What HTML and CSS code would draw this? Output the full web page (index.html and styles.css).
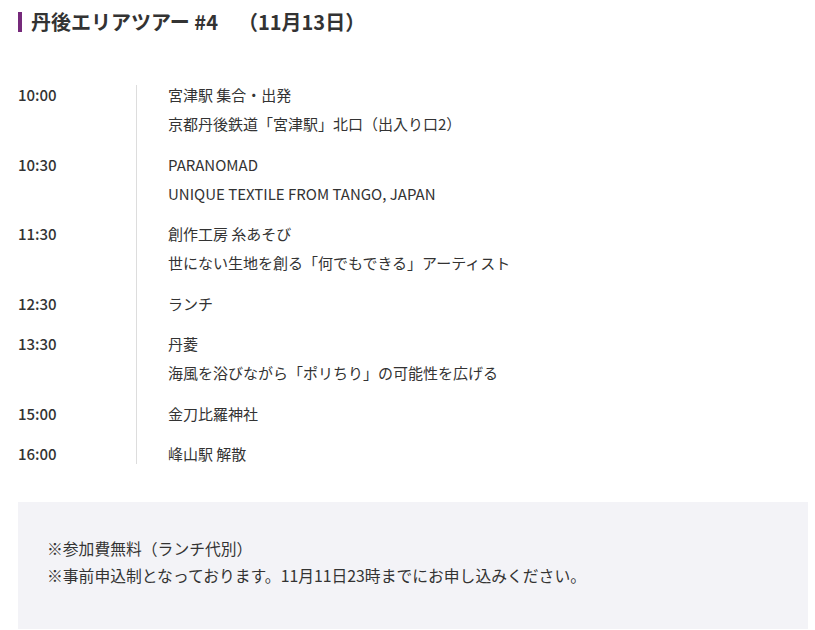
FILE: index.html
```html
<!DOCTYPE html>
<html lang="ja">
<head>
    <meta charset="UTF-8">
    <title>丹後エリアツアー #4</title>
    <meta name="viewport" content="width=device-width, initial-scale=1">
    <link rel="stylesheet" href="styles.css">
</head>
<body>
    <div class="container">
        <h2 class="tour-title">丹後エリアツアー #4<span class="tour-date">（11月13日）</span></h2>

        <div class="schedule">
            <div class="row">
                <div class="time">10:00</div>
                <div class="detail">
                    <p>宮津駅 集合・出発</p>
                    <p>京都丹後鉄道「宮津駅」北口（出入り口2）</p>
                </div>
            </div>
            <div class="row">
                <div class="time">10:30</div>
                <div class="detail">
                    <p>PARANOMAD</p>
                    <p>UNIQUE TEXTILE FROM TANGO, JAPAN</p>
                </div>
            </div>
            <div class="row">
                <div class="time">11:30</div>
                <div class="detail">
                    <p>創作工房 糸あそび</p>
                    <p>世にない生地を創る「何でもできる」アーティスト</p>
                </div>
            </div>
            <div class="row">
                <div class="time">12:30</div>
                <div class="detail">
                    <p>ランチ</p>
                </div>
            </div>
            <div class="row">
                <div class="time">13:30</div>
                <div class="detail">
                    <p>丹菱</p>
                    <p>海風を浴びながら「ポリちり」の可能性を広げる</p>
                </div>
            </div>
            <div class="row">
                <div class="time">15:00</div>
                <div class="detail">
                    <p>金刀比羅神社</p>
                </div>
            </div>
            <div class="row">
                <div class="time">16:00</div>
                <div class="detail">
                    <p>峰山駅 解散</p>
                </div>
            </div>
        </div>

        <div class="notes">
            <p>※参加費無料（ランチ代別）</p>
            <p>※事前申込制となっております。11月11日23時までにお申し込みください。</p>
        </div>
    </div>
</body>
</html>
```

FILE: styles.css
```css
body {
    margin: 0;
    font-family: "Noto Sans CJK JP", "Noto Sans", sans-serif;
    color: #333;
    background: #fff;
}

.container {
    width: 790px;
    margin-left: 18px;
    padding-top: 12px;
}

.tour-title {
    margin: 0;
    font-size: 20px;
    line-height: 20px;
    font-weight: 700;
    border-left: 4px solid #762a7b;
    padding-left: 9px;
    color: #333;
}

    .tour-title .tour-date {
        margin-left: 20px;
    }

.schedule {
    margin-top: 53px;
}

.row {
    display: flex;
}

.time {
    width: 118px;
    font-size: 15px;
    line-height: 20px;
    font-weight: 500;
}

.detail {
    flex: 1;
    border-left: 1px solid #ddd;
    padding-left: 31px;
    padding-bottom: 20.5px;
    font-size: 15px;
    line-height: 20px;
}

    .detail p {
        margin: 0 0 9px 0;
    }

    .detail p:last-child {
        margin-bottom: 0;
    }

.row:last-child .detail {
    padding-bottom: 0;
}

.notes {
    margin-top: 38px;
    background: #f3f3f7;
    padding: 33px 29px 40px 29px;
    font-size: 15.8px;
    line-height: 27px;
}

    .notes p {
        margin: 0;
    }
```
